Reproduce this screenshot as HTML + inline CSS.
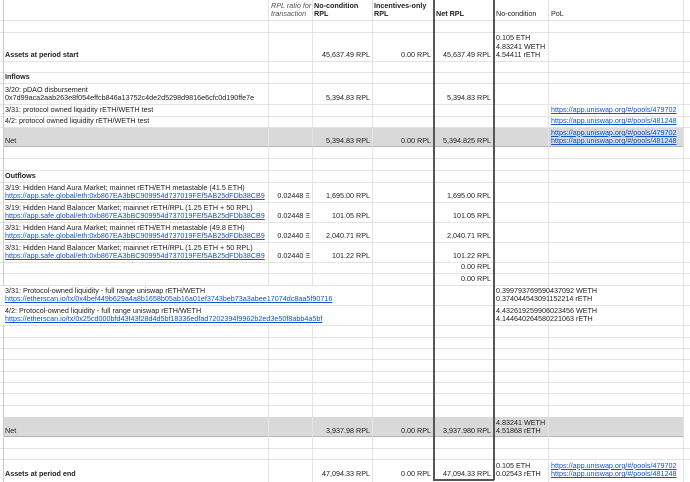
<!DOCTYPE html><html><head><style>
body{margin:0;width:690px;height:482px;overflow:hidden;background:#fff;font-family:"Liberation Sans",Arial,sans-serif;font-size:7.2px;color:#222;position:relative}
.h{position:absolute;left:0;width:690px;height:1px;background:#e3e3e3}
.v{position:absolute;top:0;height:482px;width:1px;background:#e3e3e3}
.g{position:absolute;left:3px;width:680px;background:#d9d9d9;border-bottom:1px solid #b5b5b5}
.c{position:absolute;display:flex;flex-direction:column;justify-content:flex-end;padding:0 2px 1px 2px;box-sizing:border-box;white-space:nowrap;line-height:8.6px}
.r{align-items:flex-end}
b{font-weight:bold}
a{color:#1155cc;text-decoration:underline}
.box{position:absolute;top:0;height:480px;width:1.5px;background:#555}
</style></head><body>
<div class="g" style="top:127px;height:19px"></div>
<div class="g" style="top:417px;height:19px"></div>
<div class="h" style="top:20px"></div><div class="h" style="top:32px"></div><div class="h" style="top:61px"></div><div class="h" style="top:72px"></div><div class="h" style="top:83px"></div><div class="h" style="top:104px"></div><div class="h" style="top:116px"></div><div class="h" style="top:127px"></div><div class="h" style="top:158px"></div><div class="h" style="top:170px"></div><div class="h" style="top:182px"></div><div class="h" style="top:202px"></div><div class="h" style="top:222px"></div><div class="h" style="top:242px"></div><div class="h" style="top:262px"></div><div class="h" style="top:273px"></div><div class="h" style="top:285px"></div><div class="h" style="top:305px"></div><div class="h" style="top:325px"></div><div class="h" style="top:337px"></div><div class="h" style="top:348px"></div><div class="h" style="top:359px"></div><div class="h" style="top:371px"></div><div class="h" style="top:382px"></div><div class="h" style="top:393px"></div><div class="h" style="top:405px"></div><div class="h" style="top:448px"></div><div class="h" style="top:459px"></div>
<div class="v" style="left:3px;background:#ccc"></div><div class="v" style="left:268px"></div><div class="v" style="left:312px"></div><div class="v" style="left:372px"></div><div class="v" style="left:548px"></div><div class="v" style="left:683px"></div>
<div class="box" style="left:433px"></div><div class="box" style="left:493px"></div>
<div style="position:absolute;left:433px;top:479px;width:61px;height:1.5px;background:#555"></div>

<div class="c" style="left:268px;top:0;width:44px;height:20px;color:#555;font-style:italic;padding-left:3px">RPL ratio for<br>transaction</div>
<div class="c" style="left:312px;top:0;width:60px;height:20px"><b>No-condition<br>RPL</b></div>
<div class="c" style="left:372px;top:0;width:61px;height:20px"><b>Incentives-only<br>RPL</b></div>
<div class="c" style="left:434px;top:0;width:59px;height:20px"><b>Net RPL</b></div>
<div class="c" style="left:494px;top:0;width:54px;height:20px">No-condition</div>
<div class="c" style="left:548px;top:0;width:135px;height:20px;padding-left:3px">PoL</div>

<div class="c" style="left:3px;top:32px;width:265px;height:29px"><b>Assets at period start</b></div>
<div class="c r" style="left:312px;top:32px;width:60px;height:29px">45,637.49 RPL</div>
<div class="c r" style="left:372px;top:32px;width:61px;height:29px">0.00 RPL</div>
<div class="c r" style="left:434px;top:32px;width:59px;height:29px">45,637.49 RPL</div>
<div class="c" style="left:494px;top:32px;width:54px;height:29px">0.105 ETH<br>4.83241 WETH<br>4.54411 rETH</div>

<div class="c" style="left:3px;top:72px;width:265px;height:11px"><b>Inflows</b></div>
<div class="c" style="left:3px;top:83px;width:265px;height:21px">3/20: pDAO disbursement<br>0x7d99aca2aab263e8f054effcb846a13752c4de2d5298d9816e6cfc0d190ffe7e</div>
<div class="c r" style="left:312px;top:83px;width:60px;height:21px">5,394.83 RPL</div>
<div class="c r" style="left:434px;top:83px;width:59px;height:21px">5,394.83 RPL</div>
<div class="c" style="left:3px;top:104px;width:265px;height:12px">3/31: protocol owned liquidity rETH/WETH test</div>
<div class="c" style="left:548px;top:104px;width:135px;height:12px;padding-left:3px"><a>https://app.uniswap.org/#/pools/479702</a></div>
<div class="c" style="left:3px;top:116px;width:265px;height:11px">4/2: protocol owned liquidity rETH/WETH test</div>
<div class="c" style="left:548px;top:116px;width:135px;height:11px;padding-left:3px"><a>https://app.uniswap.org/#/pools/481248</a></div>
<div class="c" style="left:3px;top:127px;width:265px;height:20px">Net</div>
<div class="c r" style="left:312px;top:127px;width:60px;height:20px">5,394.83 RPL</div>
<div class="c r" style="left:372px;top:127px;width:61px;height:20px">0.00 RPL</div>
<div class="c r" style="left:434px;top:127px;width:59px;height:20px">5,394.825 RPL</div>
<div class="c" style="left:548px;top:127px;width:135px;height:20px;padding-left:3px"><a>https://app.uniswap.org/#/pools/479702</a><a>https://app.uniswap.org/#/pools/481248</a></div>

<div class="c" style="left:3px;top:170px;width:265px;height:12px"><b>Outflows</b></div>
<div class="c" style="left:3px;top:182px;width:265px;height:20px">3/19: Hidden Hand Aura Market; mainnet rETH/ETH metastable (41.5 ETH)<br><a>https://app.safe.global/eth:0xb867EA3bBC909954d737019FEf5AB25dFDb38CB9</a></div>
<div class="c r" style="left:268px;top:182px;width:44px;height:20px">0.02448 Ξ</div>
<div class="c r" style="left:312px;top:182px;width:60px;height:20px">1,695.00 RPL</div>
<div class="c r" style="left:434px;top:182px;width:59px;height:20px">1,695.00 RPL</div>
<div class="c" style="left:3px;top:202px;width:265px;height:20px">3/19: Hidden Hand Balancer Market; mainnet rETH/RPL (1.25 ETH + 50 RPL)<br><a>https://app.safe.global/eth:0xb867EA3bBC909954d737019FEf5AB25dFDb38CB9</a></div>
<div class="c r" style="left:268px;top:202px;width:44px;height:20px">0.02448 Ξ</div>
<div class="c r" style="left:312px;top:202px;width:60px;height:20px">101.05 RPL</div>
<div class="c r" style="left:434px;top:202px;width:59px;height:20px">101.05 RPL</div>
<div class="c" style="left:3px;top:222px;width:265px;height:20px">3/31: Hidden Hand Aura Market; mainnet rETH/ETH metastable (49.8 ETH)<br><a>https://app.safe.global/eth:0xb867EA3bBC909954d737019FEf5AB25dFDb38CB9</a></div>
<div class="c r" style="left:268px;top:222px;width:44px;height:20px">0.02440 Ξ</div>
<div class="c r" style="left:312px;top:222px;width:60px;height:20px">2,040.71 RPL</div>
<div class="c r" style="left:434px;top:222px;width:59px;height:20px">2,040.71 RPL</div>
<div class="c" style="left:3px;top:242px;width:265px;height:20px">3/31: Hidden Hand Balancer Market; mainnet rETH/RPL (1.25 ETH + 50 RPL)<br><a>https://app.safe.global/eth:0xb867EA3bBC909954d737019FEf5AB25dFDb38CB9</a></div>
<div class="c r" style="left:268px;top:242px;width:44px;height:20px">0.02440 Ξ</div>
<div class="c r" style="left:312px;top:242px;width:60px;height:20px">101.22 RPL</div>
<div class="c r" style="left:434px;top:242px;width:59px;height:20px">101.22 RPL</div>
<div class="c r" style="left:434px;top:262px;width:59px;height:11px">0.00 RPL</div>
<div class="c r" style="left:434px;top:273px;width:59px;height:12px">0.00 RPL</div>
<div class="c" style="left:3px;top:286px;width:335px;height:19px;background:#fff">3/31: Protocol-owned liquidity - full range uniswap rETH/WETH<br><a>https://etherscan.io/tx/0x4bef449b629a4a8b1658b05ab16a01ef3743beb73a3abee17074dc8aa5f90716</a></div>
<div class="c" style="left:494px;top:285px;width:100px;height:20px">0.399793769590437092 WETH<br>0.374044543091152214 rETH</div>
<div class="c" style="left:3px;top:306px;width:325px;height:19px;background:#fff">4/2: Protocol-owned liquidity - full range uniswap rETH/WETH<br><a>https://etherscan.io/tx/0x25cd000bfd43f43f28d4d5bf18336edfad7202394f9962b2ed3e50f8abb4a5bf</a></div>
<div class="c" style="left:494px;top:305px;width:100px;height:20px">4.432619259906023456 WETH<br>4.144640264580221063 rETH</div>

<div class="c" style="left:3px;top:417px;width:265px;height:20px">Net</div>
<div class="c r" style="left:312px;top:417px;width:60px;height:20px">3,937.98 RPL</div>
<div class="c r" style="left:372px;top:417px;width:61px;height:20px">0.00 RPL</div>
<div class="c r" style="left:434px;top:417px;width:59px;height:20px">3,937.980 RPL</div>
<div class="c" style="left:494px;top:417px;width:54px;height:20px">4.83241 WETH<br>4.51868 rETH</div>

<div class="c" style="left:3px;top:459px;width:265px;height:21px"><b>Assets at period end</b></div>
<div class="c r" style="left:312px;top:459px;width:60px;height:21px">47,094.33 RPL</div>
<div class="c r" style="left:372px;top:459px;width:61px;height:21px">0.00 RPL</div>
<div class="c r" style="left:434px;top:459px;width:59px;height:21px">47,094.33 RPL</div>
<div class="c" style="left:494px;top:459px;width:54px;height:21px">0.105 ETH<br>0.02543 rETH</div>
<div class="c" style="left:548px;top:459px;width:135px;height:21px;padding-left:3px"><a>https://app.uniswap.org/#/pools/479702</a><a>https://app.uniswap.org/#/pools/481248</a></div>
</body></html>
